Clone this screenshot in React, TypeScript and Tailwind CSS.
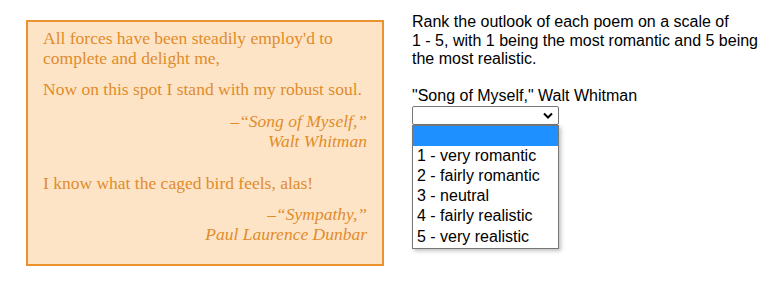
import React from "react";

export default function App() {
  const serif = { fontFamily: '"Liberation Serif", "Times New Roman", serif' };
  return (
    <div className="w-[784px] h-[307px] bg-white flex items-start" style={{ fontFamily: '"Liberation Sans", Arial, sans-serif' }}>
      <div
        className="ml-[26px] mt-[20px] w-[358px] h-[246px] border-2 border-[#eb912d] bg-[#fee4c6] text-[#e08c2c] text-[17.5px] leading-[20px] px-[15px] pt-[6px]"
        style={serif}
      >
        <p>
          All forces have been steadily employ'd to
          <br />
          complete and delight me,
        </p>
        <p className="mt-[11px]">Now on this spot I stand with my robust soul.</p>
        <p className="mt-[12px] text-right italic">
          –“Song of Myself,”
          <br />
          Walt Whitman
        </p>
        <p className="mt-[22px]">I know what the caged bird feels, alas!</p>
        <p className="mt-[11px] text-right italic">
          –“Sympathy,”
          <br />
          Paul Laurence Dunbar
        </p>
      </div>
      <div className="ml-[28px] mt-[13px] text-[16px] leading-[18.5px] text-black">
        <p>
          Rank the outlook of each poem on a scale of
          <br />
          1 - 5, with 1 being the most romantic and 5 being
          <br />
          the most realistic.
        </p>
        <p className="mt-[18.5px]">"Song of Myself," Walt Whitman</p>
        <div className="relative w-[147px]">
          <div className="h-[19px] border border-[#767676] rounded-[2px] bg-white flex items-center justify-end pr-[5px]">
            <svg width="10" height="7" viewBox="0 0 10 7">
              <path d="M1 1.5 L5 5.5 L9 1.5" fill="none" stroke="#000" strokeWidth="2" />
            </svg>
          </div>
          <div className="absolute left-0 top-[19px] w-[147px] border border-[#767676] bg-white shadow-[2px_2px_4px_rgba(0,0,0,0.25)]">
            <div className="h-[20px] bg-[#1e90ff]"></div>
            {["1 - very romantic", "2 - fairly romantic", "3 - neutral", "4 - fairly realistic", "5 - very realistic"].map((t) => (
              <div key={t} className="h-[20.3px] leading-[20px] pl-[4px] text-[16px] whitespace-nowrap">
                {t}
              </div>
            ))}
            <div className="h-[1px]"></div>
          </div>
        </div>
      </div>
    </div>
  );
}
